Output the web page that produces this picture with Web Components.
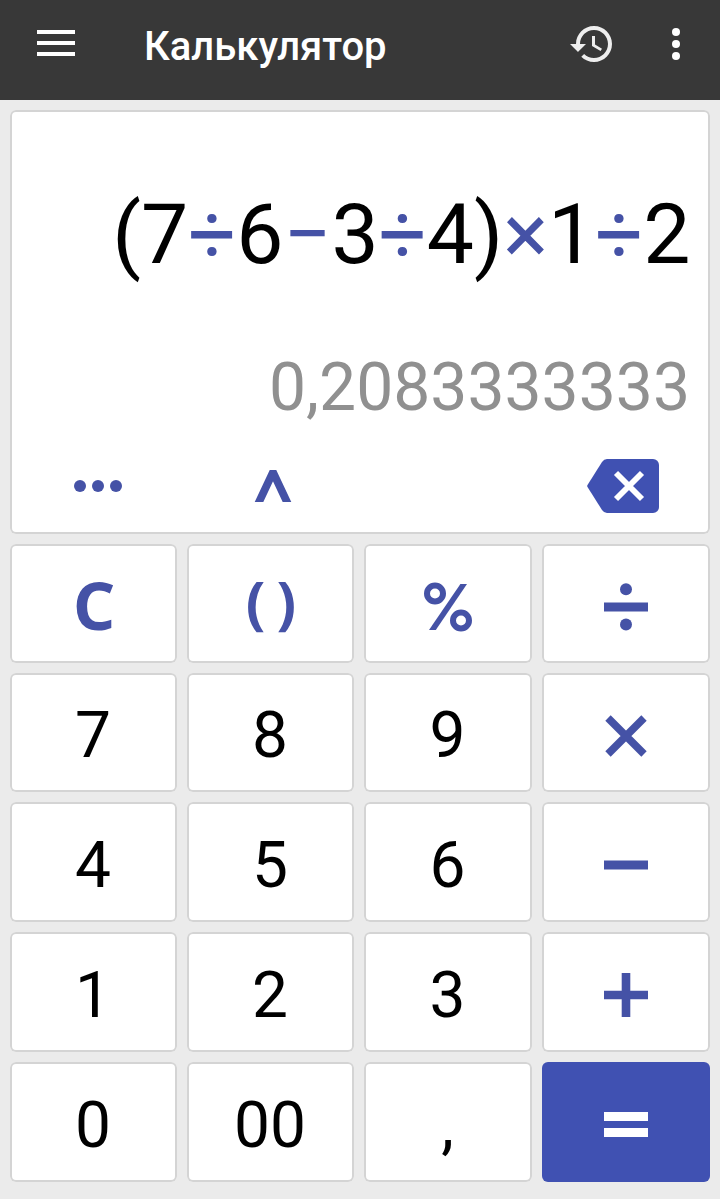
<!DOCTYPE html>
<html lang="ru">
<head>
<meta charset="utf-8">
<meta name="viewport" content="width=device-width, initial-scale=1">
<title>Калькулятор</title>
<style>
:root {
  --calc-accent: #4051b2;
  --calc-glyph:  #4552a6;
  --calc-bg:     #ebebeb;
  --calc-border: #d4d4d4;
}
html, body { margin: 0; height: 100%; }
body { background: var(--calc-bg); font-family: Roboto, sans-serif; overflow: hidden; }
</style>
</head>
<body>
<calc-app></calc-app>

<script>
/**
 * <calc-icon> — inline SVG icon.
 *
 * Attributes:
 *   name   key of ICONS; drawn at its natural size in currentColor
 */
const ICONS = {
  menu: [38, 26, '<path d="M0 2h38M0 13h38M0 24h38" stroke="currentColor" stroke-width="4"/>'],
  history: [48, 48, '<path transform="scale(2)" fill="currentColor" d="M13 3c-4.97 0-9 4.03-9 9H1l3.89 3.89.07.14L9 12H6c0-3.87 3.13-7 7-7s7 3.13 7 7-3.13 7-7 7c-1.93 0-3.68-.79-4.94-2.06l-1.42 1.42C8.27 19.99 10.51 21 13 21c4.97 0 9-4.03 9-9s-4.03-9-9-9zm-1 5v5l4.28 2.54.72-1.21-3.5-2.08V8H12z"/>'],
  overflow: [8, 32, '<g fill="currentColor"><circle cx="4" cy="4" r="4"/><circle cx="4" cy="16" r="4"/><circle cx="4" cy="28" r="4"/></g>'],
  more: [48, 12, '<g fill="currentColor"><circle cx="6" cy="6" r="6"/><circle cx="24" cy="6" r="6"/><circle cx="42" cy="6" r="6"/></g>'],
  caret: [38, 32, '<path d="M2.2 38L19 2.2 35.8 38" fill="none" stroke="currentColor" stroke-width="7.8"/>'],
  backspace: [72, 54, '<path d="M20 0h46a6 6 0 0 1 6 6v42a6 6 0 0 1-6 6H20q-3 0-5-3L0.5 28q-.6-1 0-2L15 3q2-3 5-3z" fill="currentColor"/><path d="M29 14l26 26M55 14L29 40" stroke="#fff" stroke-width="5.8"/>'],
  percent: [48, 50, '<g fill="none" stroke="currentColor"><circle cx="11" cy="11.5" r="8" stroke-width="6"/><circle cx="37" cy="38.5" r="8" stroke-width="6"/></g><path d="M5 48L36.4 2h6.6L11.8 48z" fill="currentColor"/>'],
  divide: [44, 48, '<path d="M0 19.5h44v9H0z" fill="currentColor"/><circle cx="22" cy="6.2" r="6" fill="currentColor"/><circle cx="22" cy="41.6" r="6" fill="currentColor"/>'],
  multiply: [42, 42, '<path d="M3 3l36 36M39 3L3 39" stroke="currentColor" stroke-width="7.6"/>'],
  minus: [44, 10, '<path d="M0 .5h44v9H0z" fill="currentColor"/>'],
  plus: [44, 44, '<path d="M0 22h44M22 0v44" stroke="currentColor" stroke-width="8.6"/>'],
  equals: [44, 26, '<path d="M0 0h44v9H0zM0 16h44v9H0z" fill="currentColor"/>'],
};

class CalcIcon extends HTMLElement {
  constructor() {
    super();
    this.attachShadow({ mode: 'open' });
  }

  connectedCallback() {
    const [w, h, body] = ICONS[this.getAttribute('name')];
    this.shadowRoot.innerHTML = `
      <style>
        :host { display: inline-flex; flex-shrink: 0; }
        svg { display: block; }
      </style>
      <svg width="${w}" height="${h}" viewBox="0 0 ${w} ${h}" aria-hidden="true">${body}</svg>`;
  }
}

/**
 * <calc-header> — dark app bar. Default slot holds the title.
 */
class CalcHeader extends HTMLElement {
  constructor() {
    super();
    this.attachShadow({ mode: 'open' });
    this.shadowRoot.innerHTML = `
      <style>
        :host {
          display: flex;
          align-items: center;
          box-sizing: border-box;
          height: 100px;
          padding: 0 40px 12px 37px;
          background: #383838;
          color: #fff;
        }
        button { display: flex; padding: 0; border: 0; background: none; color: inherit; }
        .menu { margin-bottom: 2px; }
        h1 {
          flex: 1;
          margin: 0 0 0 69px;
          padding-top: 6px;
          font-size: 40px;
          font-weight: 500;
          line-height: 48px;
        }
        .history { margin-right: 56px; color: #eee; }
      </style>
      <button class="menu" aria-label="Меню"><calc-icon name="menu"></calc-icon></button>
      <h1><slot></slot></h1>
      <button class="history" aria-label="История"><calc-icon name="history"></calc-icon></button>
      <button aria-label="Ещё"><calc-icon name="overflow"></calc-icon></button>`;
  }
}

/**
 * <calc-display> — expression, live result and the tool row.
 *
 * Attributes:
 *   expression   operators are tinted with the accent colour
 *   result       preview value
 */
class CalcDisplay extends HTMLElement {
  constructor() {
    super();
    this.attachShadow({ mode: 'open' });
  }

  connectedCallback() {
    const expr = this.getAttribute('expression').replace(/[÷×−+]/g, '<span>$&</span>');
    this.shadowRoot.innerHTML = `
      <style>
        :host {
          display: flex;
          flex-direction: column;
          box-sizing: border-box;
          height: 424px;
          padding-top: 76px;
          border-radius: 6px;
          background: #fff;
          box-shadow: inset 0 0 0 2px var(--calc-border);
          text-align: right;
          white-space: nowrap;
        }
        .expression { padding-right: 19.5px; font-size: 84px; line-height: 98px; color: #000; }
        .expression span { color: var(--calc-glyph); }
        .result { margin-top: 65px; padding-right: 20px; font-size: 66px; line-height: 78px; color: #909090; }
        .tools {
          flex: 1;
          display: grid;
          grid-template-columns: repeat(4, 1fr);
          place-items: center;
          padding-top: 11px;
          color: var(--calc-glyph);
        }
        button { display: flex; padding: 0; border: 0; background: none; color: inherit; }
        .erase { grid-column: 4; color: var(--calc-accent); }
      </style>
      <div class="expression">${expr}</div>
      <div class="result">${this.getAttribute('result')}</div>
      <div class="tools">
        <button aria-label="Функции"><calc-icon name="more"></calc-icon></button>
        <button aria-label="Степень"><calc-icon name="caret"></calc-icon></button>
        <button class="erase" aria-label="Стереть"><calc-icon name="backspace"></calc-icon></button>
      </div>`;
  }
}

/**
 * <calc-key> — one key of the pad.
 *
 * Attributes:
 *   variant   "function" | "operator" | "submit"; plain digit key when absent
 */
class CalcKey extends HTMLElement {
  constructor() {
    super();
    this.attachShadow({ mode: 'open' });
    this.shadowRoot.innerHTML = `
      <style>
        :host { display: flex; min-width: 0; min-height: 0; }
        button {
          flex: 1;
          display: flex;
          align-items: center;
          justify-content: center;
          padding: 6px 1px 0 0;
          border: 0;
          border-radius: 6px;
          background: #fff;
          box-shadow: inset 0 0 0 2px var(--calc-border);
          color: #000;
          font: 400 64px/75px Roboto, sans-serif;
        }
        :host([variant]) button { padding-right: 0; color: var(--calc-glyph); }
        :host([variant="function"]) button { padding: 0 0 0 1px; font: 700 67px/80px "Open Sans", sans-serif; }
        :host([variant="submit"]) button { background: var(--calc-accent); box-shadow: none; color: #fff; }
      </style>
      <button type="button"><slot></slot></button>`;
  }
}

class CalcApp extends HTMLElement {
  constructor() {
    super();
    this.attachShadow({ mode: 'open' });
    this.shadowRoot.innerHTML = `
      <style>
        :host { display: flex; flex-direction: column; height: 1199px; }
        main { flex: 1; display: flex; flex-direction: column; gap: 10px; padding: 10px 10px 17px; }
        .pad {
          flex: 1;
          display: grid;
          grid-template-columns: 167px 167px 168px 168px;
          grid-template-rows: 119px 119px 120px 120px 120px;
          gap: 10px;
        }
        .parens { display: flex; gap: 11px; padding-bottom: 5px; font-size: 58px; line-height: 70px; }
      </style>
      <calc-header>Калькулятор</calc-header>
      <main>
        <calc-display expression="(7÷6−3÷4)×1÷2" result="0,2083333333"></calc-display>
        <div class="pad">
          <calc-key variant="function">C</calc-key>
          <calc-key variant="function"><span class="parens"><span>(</span><span>)</span></span></calc-key>
          <calc-key variant="operator"><calc-icon name="percent"></calc-icon></calc-key>
          <calc-key variant="operator"><calc-icon name="divide"></calc-icon></calc-key>
          <calc-key>7</calc-key>
          <calc-key>8</calc-key>
          <calc-key>9</calc-key>
          <calc-key variant="operator"><calc-icon name="multiply"></calc-icon></calc-key>
          <calc-key>4</calc-key>
          <calc-key>5</calc-key>
          <calc-key>6</calc-key>
          <calc-key variant="operator"><calc-icon name="minus"></calc-icon></calc-key>
          <calc-key>1</calc-key>
          <calc-key>2</calc-key>
          <calc-key>3</calc-key>
          <calc-key variant="operator"><calc-icon name="plus"></calc-icon></calc-key>
          <calc-key>0</calc-key>
          <calc-key>00</calc-key>
          <calc-key>,</calc-key>
          <calc-key variant="submit"><calc-icon name="equals"></calc-icon></calc-key>
        </div>
      </main>`;
  }
}

customElements.define('calc-icon', CalcIcon);
customElements.define('calc-header', CalcHeader);
customElements.define('calc-display', CalcDisplay);
customElements.define('calc-key', CalcKey);
customElements.define('calc-app', CalcApp);
</script>
</body>
</html>
